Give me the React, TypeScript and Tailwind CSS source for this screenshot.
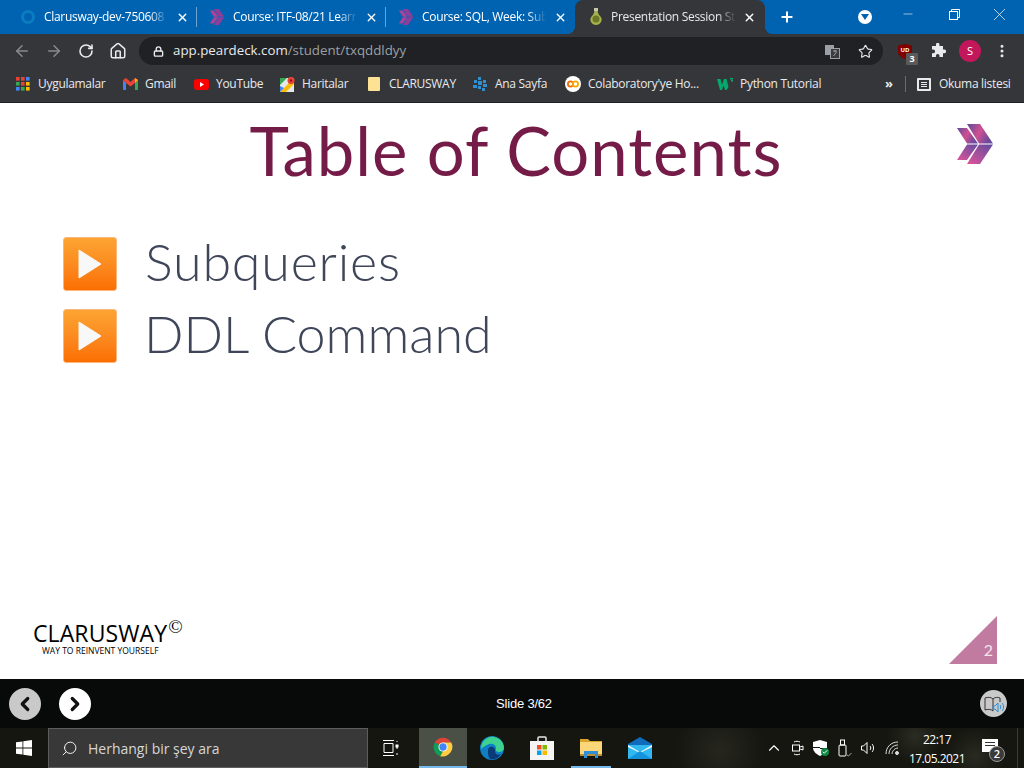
import { ArrowLeft, ArrowRight, Check, ChevronLeft, ChevronRight, ChevronUp, Home, Lock, Minus, MoreVertical, Plus, RotateCw, Search, Star, X } from "lucide-react";

const uiFont = "font-['Open_Sans','Noto_Sans',sans-serif]";

const ChevronMark = () => (
  <svg width="16" height="16" viewBox="0 0 38 40">
    <path d="M1 4h10l11 15.500H11zM11 20.500h11L11 36H1z" fill="#a8459a" />
    <path d="M11 0h13l13 19.500H23zM23 20.500h14L24 40H11z" fill="#8a3f9b" />
  </svg>
);

const SlideMark = () => (
  <svg width="38" height="40" viewBox="0 0 38 40">
    <defs>
      <linearGradient id="markA" x1="0" y1="0" x2="1" y2="0.4">
        <stop offset="0" stopColor="#5b4a9e" />
        <stop offset="0.55" stopColor="#d0508f" />
        <stop offset="1" stopColor="#6d4a9e" />
      </linearGradient>
      <linearGradient id="markB" x1="0" y1="1" x2="1" y2="0">
        <stop offset="0" stopColor="#e0559a" />
        <stop offset="1" stopColor="#5f4a9e" />
      </linearGradient>
    </defs>
    <path d="M1 4h10l11 15.500H11z" fill="url(#markA)" />
    <path d="M11 20.500h11L11 36H1z" fill="url(#markB)" />
    <path d="M11 0h13l13 19.500H23z" fill="url(#markA)" />
    <path d="M23 20.500h14L24 40H11z" fill="url(#markB)" />
  </svg>
);

const Tab = ({ icon, title, first, last }: { icon: React.ReactNode; title: string; first?: boolean; last?: boolean }) => (
  <div className={`relative flex ${first ? "w-[197px] pl-[20px]" : "w-[189px] pl-[12px]"} h-[34px] items-center pr-[8px] gap-[8px] ${last ? "" : "after:content-[''] after:absolute after:right-0 after:top-[7px] after:h-[20px] after:w-px after:bg-[#6fa3d0]"}`}>
    <span className="w-[16px] h-[16px] flex items-center justify-center shrink-0">{icon}</span>
    <span className="flex-1 overflow-hidden whitespace-nowrap text-[12px] tracking-[-0.3px] text-white [mask-image:linear-gradient(to_right,black_85%,transparent)]">{title}</span>
    <X size={13} strokeWidth={2.5} className="text-white shrink-0" />
  </div>
);

const Bookmark = ({ icon, label, width }: { icon: React.ReactNode; label: string; width: string }) => (
  <div className={`flex items-center gap-[7px] shrink-0 ${width}`}>
    <span className="w-[16px] h-[16px] flex items-center justify-center shrink-0">{icon}</span>
    <span className="text-[12px] tracking-[-0.3px] text-[#e8eaed] whitespace-nowrap">{label}</span>
  </div>
);

const AppsIcon = () => (
  <svg width="14" height="14" viewBox="0 0 14 14">
    {["#ea4335", "#ea4335", "#4285f4", "#34a853", "#ea4335", "#fbbc04", "#4285f4", "#34a853", "#fbbc04"].map((c, i) => (
      <rect key={i} x={(i % 3) * 5} y={Math.floor(i / 3) * 5} width="3.6" height="3.6" fill={c} />
    ))}
  </svg>
);

const GmailIcon = () => (
  <svg width="15" height="12" viewBox="0 0 15 12">
    <path d="M0 2v9a1 1 0 0 0 1 1h2V5z" fill="#4285f4" />
    <path d="M15 2v9a1 1 0 0 1-1 1h-2V5z" fill="#34a853" />
    <path d="M0 2 3 0l4.500 4L12 0l3 2-3 3-4.500 3.500L3 5z" fill="#ea4335" />
    <path d="M12 0l3 2-3 3z" fill="#fbbc04" />
  </svg>
);

const YoutubeIcon = () => (
  <svg width="15" height="11" viewBox="0 0 15 11">
    <rect width="15" height="11" rx="3" fill="#f00" />
    <path d="M6 3l4 2.500L6 8z" fill="#fff" />
  </svg>
);

const MapsIcon = () => (
  <svg width="15" height="15" viewBox="0 0 15 15">
    <rect y="1" width="14" height="14" fill="#e8e8e8" />
    <path d="M0 1h7L0 8z" fill="#34a853" />
    <path d="M0 15 13 2l1 5-8 8z" fill="#fbbc04" />
    <path d="M0 15V9l4 2z" fill="#4285f4" />
    <circle cx="11" cy="3.500" r="3.500" fill="#ea4335" />
    <circle cx="11" cy="3.500" r="1.200" fill="#8c1c13" />
  </svg>
);

const ColabIcon = () => (
  <svg width="16" height="16" viewBox="0 0 16 16">
    <circle cx="8" cy="8" r="8" fill="#fff" />
    <circle cx="5.500" cy="8" r="2.600" fill="none" stroke="#e8710a" strokeWidth="1.800" />
    <circle cx="10.500" cy="8" r="2.600" fill="none" stroke="#f9ab00" strokeWidth="1.800" />
  </svg>
);

const WavesIcon = () => (
  <svg width="16" height="16" viewBox="0 0 16 16" fill="#2f8fd0">
    <rect x="6" y="1" width="3" height="3" /><rect x="2" y="4" width="3" height="3" /><rect x="6" y="5" width="4" height="4" />
    <rect x="11" y="4" width="3" height="3" /><rect x="1" y="9" width="4" height="3" /><rect x="6" y="10" width="3" height="3" />
    <rect x="11" y="8" width="4" height="3" /><rect x="10" y="12" width="3" height="3" />
  </svg>
);

const W3Icon = () => (
  <svg width="16" height="13" viewBox="0 0 16 13" fill="#04aa6d">
    <path d="M0 1h3.500l1.500 6 2-6h2.500l2 8-2 3H8L6.500 7 5 12H3z" />
    <rect x="13" y="0" width="3" height="1.500" /><rect x="14" y="2" width="2" height="1.500" />
  </svg>
);

const PearIcon = () => (
  <svg width="14" height="18" viewBox="0 0 14 18">
    <path d="M5 0h4v3l-1 1H6L5 3z" fill="#c8c8a8" />
    <path d="M7 3c2 0 2 3 4 5s2 4 1 6-3 3-5 3-4-1-5-3-1-4 1-6 2-5 4-5z" fill="#a6b04a" />
    <circle cx="7" cy="11" r="3.500" fill="#6a7628" />
  </svg>
);

const ChromeLogo = () => (
  <svg width="22" height="22" viewBox="0 0 48 48">
    <path d="M24 24 6 14A21 21 0 0 1 42 14H24z" fill="#db4437" />
    <path d="M6 14a21 21 0 0 0 12 30l9-16-3-4z" fill="#0f9d58" />
    <path d="M42 14H24l3 14-9 16A21 21 0 0 0 42 14z" fill="#ffcd40" />
    <circle cx="24" cy="24" r="10" fill="#fff" />
    <circle cx="24" cy="24" r="8" fill="#4285f4" />
  </svg>
);

const EdgeLogo = () => (
  <svg width="24" height="24" viewBox="0 0 24 24">
    <circle cx="12" cy="12" r="12" fill="#0f7fc4" />
    <path d="M1 13C1 5 8 0 14 1c6 1 10 6 10 11 0 2-2 4-5 4-4 0-3-3-3-4 0-3-3-5-7-4-3 1-6 3-8 5z" fill="#3dd28f" />
    <path d="M8 14c0-3 3-4 5-3 2 1 2 3 2 4 0 3 3 5 6 3-3 5-8 6-11 5-2-2-2-6-2-9z" fill="#0a3a78" />
  </svg>
);

const StoreLogo = () => (
  <svg width="24" height="24" viewBox="0 0 24 24">
    <path d="M8 6V2a1 1 0 0 1 1-1h6a1 1 0 0 1 1 1v4" fill="none" stroke="#e8e8e8" strokeWidth="1.500" />
    <rect y="5" width="24" height="19" fill="#f4f4f4" />
    <rect x="7" y="9" width="4.500" height="4.500" fill="#f25022" /><rect x="12.500" y="9" width="4.500" height="4.500" fill="#7fba00" />
    <rect x="7" y="14.500" width="4.500" height="4.500" fill="#00a4ef" /><rect x="12.500" y="14.500" width="4.500" height="4.500" fill="#ffb900" />
  </svg>
);

const FolderLogo = () => (
  <svg width="22" height="19" viewBox="0 0 22 19">
    <path d="M0 0h8l2 2h12v4H0z" fill="#d9a42e" />
    <rect y="3" width="22" height="14" fill="#fcd679" />
    <rect y="15" width="22" height="2" fill="#b98e2e" />
    <path d="M4 19v-7h14v7h-3v-4H7v4z" fill="#2f8fd8" />
  </svg>
);

const MailLogo = () => (
  <svg width="24" height="22" viewBox="0 0 24 22">
    <path d="M0 7 12 0l12 7v15H0z" fill="#0f6cbd" />
    <path d="M0 8h24v14H0z" fill="#32b8f0" />
    <path d="M0 8l12 7 12-7v2l-12 6L0 10z" fill="#e8f6fd" />
    <path d="M0 22 12 14l12 8z" fill="#1492dc" />
  </svg>
);

const GreenDot = () => (
  <span className="absolute left-[8px] top-[8px] w-[8px] h-[8px] rounded-full bg-[#0f8a43] flex items-center justify-center">
    <Check size={6} strokeWidth={4} className="text-white" />
  </span>
);

const PlayBox = () => (
  <div className="w-[54px] h-[54px] rounded-[3px] bg-gradient-to-b from-[#fca432] to-[#fb6f00] border border-[#fbb777] flex items-center justify-center shrink-0">
    <svg width="24" height="30" viewBox="0 0 24 30">
      <path d="M1 1l22 14L1 29z" fill="#f8f8f8" stroke="#f8f8f8" strokeLinejoin="round" />
    </svg>
  </div>
);

const App = () => {
  return (
    <div className={`w-[1024px] h-[768px] flex flex-col overflow-hidden bg-white ${uiFont}`}>
      {/* tab strip */}
      <div className="h-[34px] bg-[#0063b1] flex items-center shrink-0">
        <Tab
          first
          title="Clarusway-dev-750608"
          icon={<span className="w-[14px] h-[14px] rounded-full border-[3px] border-[#0a7cc0]" />}
        />
        <Tab title="Course: ITF-08/21 Learn" icon={<ChevronMark />} />
        <Tab last title="Course: SQL, Week: Sub" icon={<ChevronMark />} />
        <div className="relative w-[190px] h-[34px] bg-[#35363a] rounded-t-[8px] flex items-center pl-[13px] pr-[9px] gap-[7px] shrink-0 before:content-[''] before:absolute before:bottom-0 before:-left-[8px] before:w-[8px] before:h-[8px] before:bg-[radial-gradient(circle_at_0_0,transparent_8px,#35363a_8px)] after:content-[''] after:absolute after:bottom-0 after:-right-[8px] after:w-[8px] after:h-[8px] after:bg-[radial-gradient(circle_at_100%_0,transparent_8px,#35363a_8px)]">
          <span className="w-[16px] h-[18px] flex items-center justify-center shrink-0"><PearIcon /></span>
          <span className="flex-1 overflow-hidden whitespace-nowrap text-[12px] tracking-[-0.3px] text-[#e8eaed] [mask-image:linear-gradient(to_right,black_85%,transparent)]">Presentation Session Student</span>
          <X size={13} strokeWidth={2.5} className="text-white shrink-0" />
        </div>
        <Plus size={16} strokeWidth={3} className="text-white ml-[14px]" />
        <span className="ml-[63px] w-[14px] h-[14px] rounded-full bg-white flex items-center justify-center">
          <svg width="8" height="6" viewBox="0 0 8 6"><path d="M0 0h8L4 6z" fill="#0063b1" /></svg>
        </span>
        <Minus size={14} strokeWidth={1} className="text-white ml-[29px] -mt-[6px]" />
        <svg width="11" height="11" viewBox="0 0 11 11" fill="none" stroke="#fff" className="ml-[34px] -mt-[6px]">
          <rect x=".5" y="2.500" width="8" height="8" /><path d="M2.500 2.500v-2h8v8h-2" />
        </svg>
        <X size={21} strokeWidth={0.8} className="text-white ml-[29px] -mt-[6px]" />
      </div>

      {/* toolbar */}
      <div className="h-[34px] bg-[#35363a] flex items-center shrink-0">
        <ArrowLeft size={18} className="text-[#8a8b8e] ml-[13px]" />
        <ArrowRight size={18} className="text-[#8a8b8e] ml-[14px]" />
        <RotateCw size={16} strokeWidth={2.4} className="text-[#e8eaed] ml-[15px]" />
        <Home size={18} strokeWidth={2} className="text-[#e8eaed] ml-[15px]" />
        <div className="ml-[12px] w-[744px] h-[28px] rounded-full bg-[#202124] flex items-center pl-[14px] pr-[10px]">
          <Lock size={11} strokeWidth={3} className="text-[#e8eaed]" />
          <span className="ml-[9px] text-[13.3px] text-[#e8eaed]">app.peardeck.com<span className="text-[#9aa0a6]">/student/txqddldyy</span></span>
          <svg width="15" height="15" viewBox="0 0 15 15" className="ml-auto">
            <rect x="0" y="1" width="9" height="10" fill="#9aa0a6" />
            <rect x="5.500" y="4.500" width="9" height="10" fill="#3a3b3e" stroke="#9aa0a6" />
            <path d="M8 7h4M10 6v2M8.500 12l3-4" stroke="#9aa0a6" fill="none" />
          </svg>
          <Star size={15} strokeWidth={1.800} className="text-[#e8eaed] ml-[18px]" />
        </div>
        <div className="relative ml-[15px] w-[14px] h-[14px]">
          <svg width="14" height="15" viewBox="0 0 14 15"><path d="M0 1.500 7 0l7 1.500V8c0 3-3 5.500-7 7-4-1.500-7-4-7-7z" fill="#800000" /></svg>
          <span className="absolute left-0 top-[3px] w-[14px] text-center text-white text-[6px] leading-[7px] font-bold">UD</span>
          <span className="absolute left-[8px] top-[9px] w-[12px] h-[12px] bg-[#5a5a5a] rounded-[1px] text-white text-[9px] leading-[12px] text-center font-bold">3</span>
        </div>
        <svg width="16" height="16" viewBox="0 0 16 16" fill="#e8eaed" className="ml-[18px]">
          <path d="M6 1.500a1.700 1.700 0 0 1 3.400 0V3H13v3.600h1.300a1.800 1.800 0 0 1 0 3.600H13V14H9.500v-1.300a1.800 1.800 0 0 0-3.600 0V14H2v-3.800h1.300a1.800 1.800 0 0 0 0-3.600H2V3h4z" />
        </svg>
        <span className="ml-[13px] w-[22px] h-[22px] rounded-full bg-[#c2185b] text-white text-[11px] flex items-center justify-center">S</span>
        <MoreVertical size={16} strokeWidth={2.5} className="text-[#e8eaed] ml-[13px]" />
      </div>

      {/* bookmarks */}
      <div className="h-[35px] bg-[#35363a] border-b border-[#1f2023] flex items-center pl-[15px] pb-[2px] shrink-0">
        <Bookmark width="w-[107px]" icon={<AppsIcon />} label="Uygulamalar" />
        <Bookmark width="w-[71px]" icon={<GmailIcon />} label="Gmail" />
        <Bookmark width="w-[86px]" icon={<YoutubeIcon />} label="YouTube" />
        <Bookmark width="w-[87px]" icon={<MapsIcon />} label="Haritalar" />
        <Bookmark width="w-[106px]" icon={<span className="w-[12px] h-[14px] bg-[#fde293] rounded-[1px]" />} label="CLARUSWAY" />
        <Bookmark width="w-[93px]" icon={<WavesIcon />} label="Ana Sayfa" />
        <Bookmark width="w-[152px]" icon={<ColabIcon />} label="Colaboratory'ye Ho..." />
        <Bookmark width="w-[168px]" icon={<W3Icon />} label="Python Tutorial" />
        <span className="text-[#e8eaed] text-[13px] font-bold">»</span>
        <span className="ml-[12px] w-px h-[16px] bg-[#6a6b6e]" />
        <span className="ml-[11px] w-[14px] h-[13px] border-2 border-[#e8eaed] rounded-[1px] flex flex-col justify-center gap-px px-[2px]">
          <span className="h-px bg-[#e8eaed]" /><span className="h-px bg-[#e8eaed]" /><span className="h-px bg-[#e8eaed]" />
        </span>
        <span className="ml-[8px] text-[12px] tracking-[-0.3px] text-[#e8eaed] whitespace-nowrap">Okuma listesi</span>
      </div>

      {/* slide */}
      <div className="relative flex-1 bg-white flex flex-col font-['Lato',sans-serif]">
        <h1 className="text-center text-[#741b47] text-[67px] tracking-[1px] leading-none mt-[14px] pl-[8px] font-normal">Table of Contents</h1>
        <div className="absolute left-[956px] top-[21px]">
          <SlideMark />
        </div>
        <div className="mt-[53px] pl-[63px] flex flex-col gap-[18px]">
          <div className="h-[54px] flex items-center gap-[28px]">
            <PlayBox />
            <span className="text-[52px] text-[#3f4659] font-light leading-none pb-[6px] tracking-[0.8px]">Subqueries</span>
          </div>
          <div className="h-[54px] flex items-center gap-[28px]">
            <PlayBox />
            <span className="text-[52px] text-[#3f4659] font-light leading-none pb-[6px] -ml-[1px]">DDL Command</span>
          </div>
        </div>
        <div className="mt-auto mb-[15px] flex items-end justify-between pl-[33px] pr-[27px]">
          <div className="mb-[8px] font-['Open_Sans',sans-serif] text-black">
            <div className="flex items-start">
              <span className="text-[23px] leading-[24px] tracking-[0.1px]">CLARUSWAY</span>
              <span className="text-[19px] leading-[17px] font-['Liberation_Serif',serif] ml-[1px] -mt-[3px]">©</span>
            </div>
            <div className="text-[8.5px] leading-[10px] pl-[9px] mt-[1px]">WAY TO REINVENT YOURSELF</div>
          </div>
          <div className="relative w-[48px] h-[48px]">
            <svg width="48" height="48" viewBox="0 0 48 48"><path d="M48 0v48H0z" fill="#c27ba0" /></svg>
            <span className="absolute right-[4px] bottom-[6px] text-[#f3e4ec] text-[16px] leading-none">2</span>
          </div>
        </div>
      </div>

      {/* deck controls */}
      <div className="h-[49px] bg-[#080a0a] flex items-center pl-[9px] pr-[17px] shrink-0">
        <span className="w-[32px] h-[32px] rounded-full bg-[#c9c9c9] flex items-center justify-center">
          <ChevronLeft size={22} strokeWidth={3.500} className="text-[#111]" />
        </span>
        <span className="ml-[18px] w-[32px] h-[32px] rounded-full bg-white flex items-center justify-center">
          <ChevronRight size={22} strokeWidth={3.500} className="text-[#111]" />
        </span>
        <span className="ml-[403px] text-[13px] tracking-[-0.2px] text-white font-['Liberation_Sans',sans-serif] w-[60px] text-center whitespace-nowrap">Slide 3/62</span>
        <span className="ml-auto w-[27px] h-[27px] rounded-full bg-[#c9c9c9] flex items-center justify-center">
          <svg width="20" height="18" viewBox="0 0 20 18" fill="none">
            <path d="M1 3c3-1 6-1 8 1v12c-2-2-5-2-8-1zM9 4c2-2 5-2 7-1v4" stroke="#333" />
            <path d="M9 11h2l3-3v9l-3-3H9zM16 10c1 1 1 3 0 4M18 8c2 2 2 6 0 8" stroke="#2a8fd8" />
          </svg>
        </span>
      </div>

      {/* taskbar */}
      <div className="relative h-[40px] bg-[#14160f] flex items-center shrink-0 bg-[radial-gradient(circle_at_720px_22px,#26261f_0,transparent_45px),radial-gradient(circle_at_915px_8px,#2b2c23_0,transparent_28px),radial-gradient(circle_at_975px_28px,#292a22_0,transparent_30px)]">
        <span className="w-[48px] flex items-center justify-center">
          <svg width="16" height="16" viewBox="0 0 16 16" fill="#fff">
            <path d="M0 2.300 6.500 1.400V7.600H0zM7.300 1.300 16 0v7.600H7.300zM0 8.400h6.500v6.200L0 13.700zM7.300 8.400H16V16l-8.700-1.300z" />
          </svg>
        </span>
        <div className="w-[320px] h-[40px] bg-[#383838] border border-[#5d5d5d] flex items-center pl-[12px]">
          <Search size={17} strokeWidth={1.300} className="text-white -scale-x-100" />
          <span className="ml-[10px] text-[14px] text-[#d6d6d6]">Herhangi bir şey ara</span>
        </div>
        <span className="ml-[15px] w-[16px] flex items-center">
          <svg width="16" height="16" viewBox="0 0 16 16" fill="none" stroke="#fff">
            <path d="M0 .5h11M0 15.500h11M1 3.500h9v9H1zM14 1v1M14 7v2M14 13v2" /><rect x="13" y="5" width="2" height="2" fill="#fff" />
          </svg>
        </span>
        <span className="ml-[20px] w-[48px] h-[40px] bg-[#4b5046] border-b-2 border-[#76b9ed] flex items-center justify-center"><ChromeLogo /></span>
        <span className="w-[50px] flex items-center justify-center"><EdgeLogo /></span>
        <span className="w-[49px] flex items-center justify-center"><StoreLogo /></span>
        <span className="w-[49px] h-[40px] flex items-center justify-center relative after:content-[''] after:absolute after:bottom-0 after:left-[5px] after:right-[4px] after:h-[2px] after:bg-[#76b9ed]"><FolderLogo /></span>
        <span className="w-[49px] flex items-center justify-center"><MailLogo /></span>
        <ChevronUp size={18} strokeWidth={1.500} className="text-white ml-[101px]" />
        <span className="ml-[9px] w-[12px] h-[16px] flex items-center justify-center">
          <svg width="12" height="16" viewBox="0 0 12 16" fill="none" stroke="#fff"><rect x=".5" y="5" width="7" height="6" /><path d="M8 7l3-1v4l-3-1M2 2c2-1 4-1 6 0M2 14c2 1 4 1 6 0" /></svg>
        </span>
        <span className="relative ml-[9px] w-[14px] h-[16px]">
          <svg width="14" height="16" viewBox="0 0 14 16"><path d="M7 0l7 2v6c0 3-3 6-7 8-4-2-7-5-7-8V2z" fill="#fff" /><path d="M7 0v8H0V7h7zM7 8h7v1H7z" fill="#15170f" /></svg>
          <GreenDot />
        </span>
        <span className="ml-[11px] w-[14px]">
          <svg width="14" height="18" viewBox="0 0 14 18" fill="none" stroke="#fff"><rect x="1" y="6" width="7" height="11" rx="1" /><rect x="2.500" y="1" width="4" height="5" /><path d="M9 16l1.500 1 3-3" stroke="#aaa" /></svg>
        </span>
        <span className="ml-[9px] w-[16px]">
          <svg width="16" height="14" viewBox="0 0 16 14" fill="none" stroke="#fff"><path d="M.5 5h2L6 1.500v11L2.500 9h-2zM9 5c1 1 1 3 0 4M11 3c2 2 2 6 0 8" /></svg>
        </span>
        <span className="ml-[8px] w-[16px]">
          <svg width="14" height="14" viewBox="0 0 14 14" fill="none" stroke="#ddd"><path d="M1 13C1 6 6 1 13 1M4 13C4 8 8 4 13 4M7 13c0-3 3-6 6-6" /><circle cx="12" cy="12" r="1.500" fill="#ddd" /></svg>
        </span>
        <div className="ml-[6px] w-[60px] flex flex-col items-center text-[12px] tracking-[-0.5px] leading-[19px] text-white pt-px">
          <span>22:17</span>
          <span>17.05.2021</span>
        </div>
        <span className="relative ml-[15px] w-[16px] h-[13px] bg-white -mt-[6px]">
          <span className="absolute left-[3px] top-[3px] w-[10px] h-px bg-[#333]" />
          <span className="absolute left-[3px] top-[6px] w-[10px] h-px bg-[#333]" />
          <span className="absolute left-[7px] top-[7px] w-[16px] h-[16px] rounded-full bg-[#3a3a3a] border border-[#999] text-white text-[11px] leading-[14px] text-center font-semibold">2</span>
        </span>
        <span className="absolute right-[6px] top-0 w-px h-[40px] bg-[#3a3c32]" />
      </div>
    </div>
  );
};

export default App;
